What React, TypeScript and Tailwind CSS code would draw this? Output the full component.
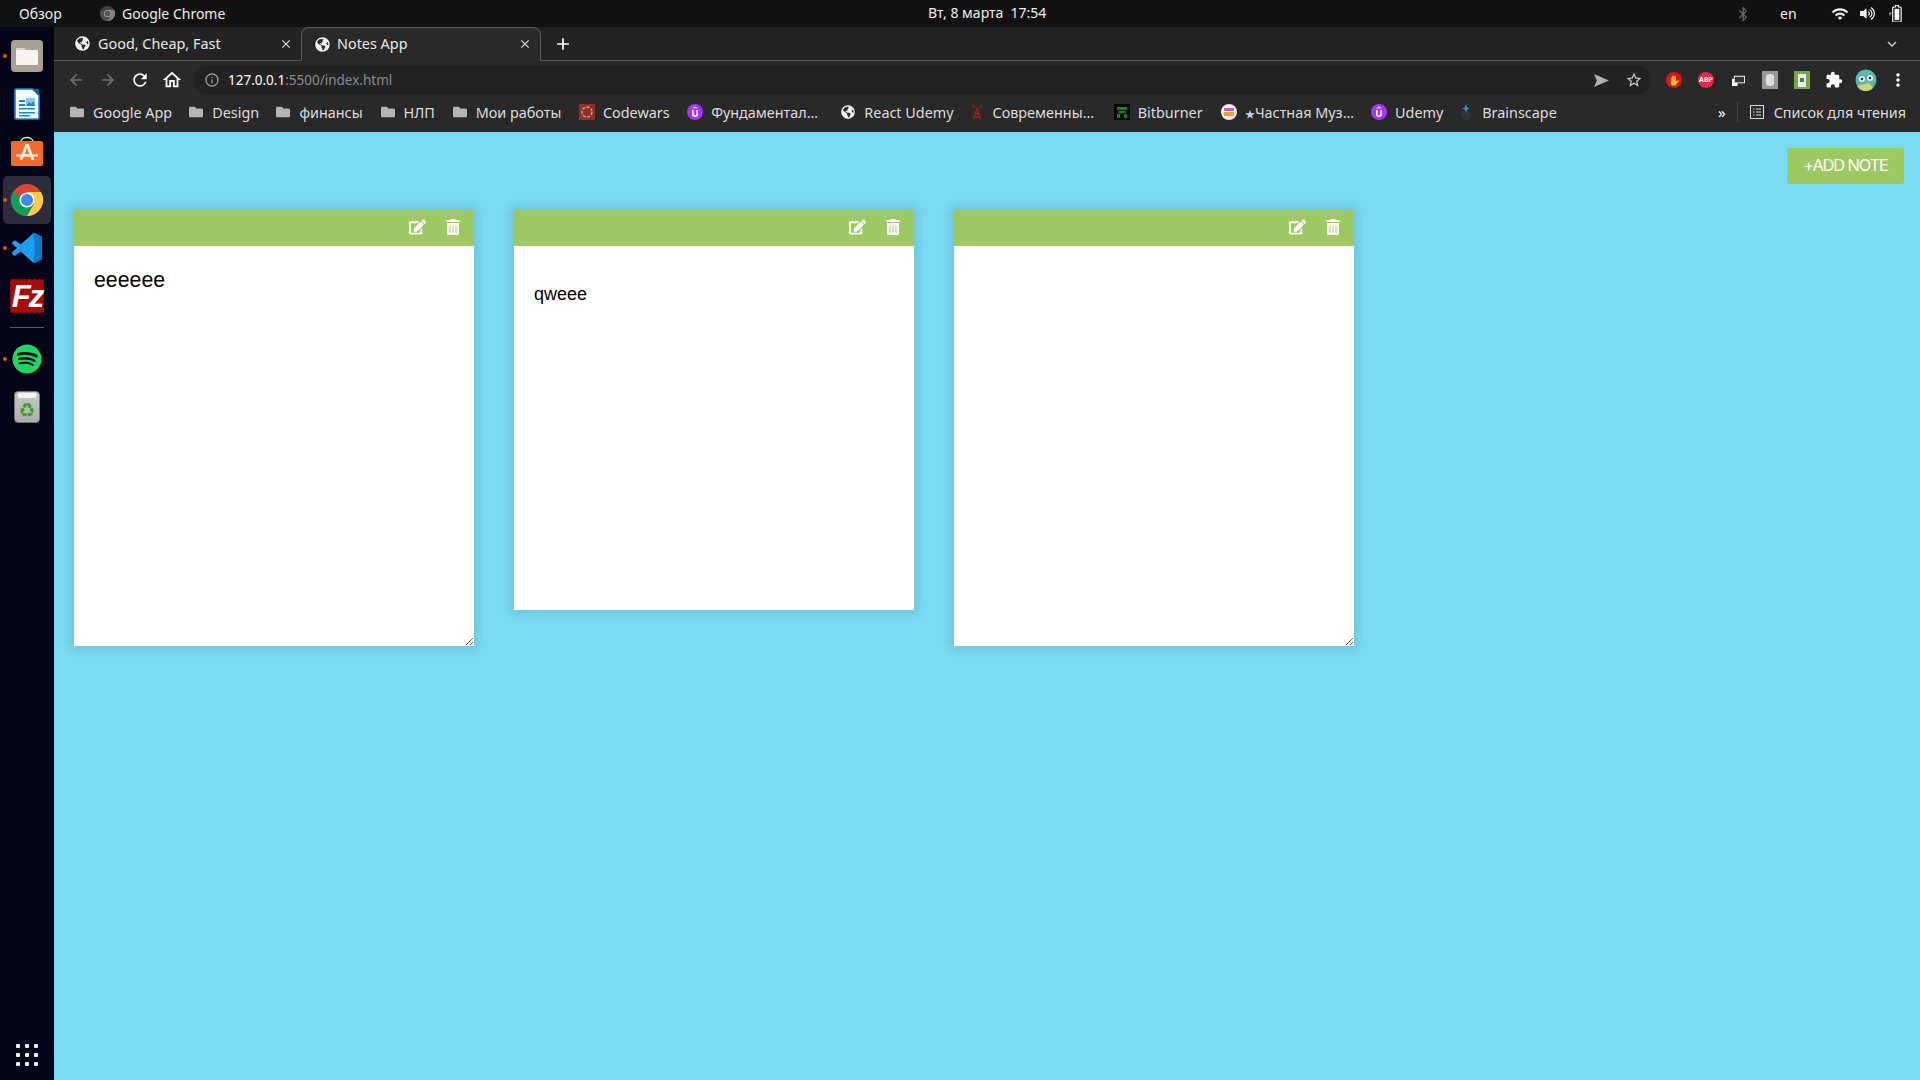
import React from "react";
import { FaEdit, FaTrashAlt, FaGlobeAmericas, FaFolder, FaBluetoothB, FaSpotify, FaVolumeUp } from "react-icons/fa";
import {
  MdArrowBack,
  MdArrowForward,
  MdRefresh,
  MdOutlineHome,
  MdInfoOutline,
  MdStarBorder,
  MdExtension,
  MdMoreVert,
  MdClose,
  MdAdd,
  MdExpandMore,
  MdWifi,
} from "react-icons/md";

const uiFont = "font-['Noto_Sans','Noto_Sans_CJK_SC',sans-serif]";

// ---- little hand drawn logos ----
const ChromeLogo = ({ className }: { className?: string }) => (
  <svg viewBox="0 0 32 32" className={className}>
    <circle cx="16" cy="16" r="16" fill="#db4437" />
    <path d="M16 16 L2.1 8 A16 16 0 0 0 16 32 L24 18z" fill="#0f9d58" />
    <path d="M16 8 H29.9 A16 16 0 0 1 16 32 L23 20z" fill="#ffcd40" />
    <circle cx="16" cy="16" r="7.6" fill="#fff" />
    <circle cx="16" cy="16" r="6" fill="#4285f4" />
  </svg>
);

const FilesIcon = () => (
  <div className="w-8 h-8 rounded-[4px] bg-[#a8a294] flex items-center justify-center">
    <svg viewBox="0 0 24 24" className="w-6 h-6">
      <path d="M1 5a1 1 0 0 1 1-1h7l2 2h11a1 1 0 0 1 1 1v13a1 1 0 0 1-1 1H2a1 1 0 0 1-1-1z" fill="#f6f4f0" />
      <path d="M1 5a1 1 0 0 1 1-1h7l2 2H1z" fill="#d8d4cb" />
    </svg>
  </div>
);

const WriterIcon = () => (
  <svg viewBox="0 0 26 32" className="w-[26px] h-8">
    <path d="M1 2a1 1 0 0 1 1-1h17l6 6v23a1 1 0 0 1-1 1H2a1 1 0 0 1-1-1z" fill="#f4f8fb" stroke="#1b87c9" strokeWidth="1.6" />
    <path d="M18 1l7 7V1z" fill="#17648f" />
    <path d="M5 12h6v2H5zM5 16h6v2H5zM5 20h16v1.6H5zM5 24h16v1.6H5zM5 27h11v1.4H5z" fill="#1b87c9" />
    <path d="M12 10h9v8h-9z" fill="#8dc3e6" />
    <path d="M12 18l3-4 2 2 2-3 2 5z" fill="#1b87c9" />
  </svg>
);

const StoreIcon = () => (
  <svg viewBox="0 0 32 32" className="w-8 h-8">
    <path d="M10 6c0-6 12-6 12 0" fill="none" stroke="#e9d9c8" strokeWidth="1.4" />
    <path d="M0 7a2 2 0 0 1 2-2h28a2 2 0 0 1 2 2v21a2 2 0 0 1-2 2H2a2 2 0 0 1-2-2z" fill="#ef6c2f" />
    <path d="M14.5 8h3l6 16h-3l-1.2-3.4h-6.6L11.5 24h-3zM16 11.5l-2.2 6.6h4.4z" fill="#fbeee4" />
    <path d="M5 18.5h22v2H5z" fill="#fbeee4" />
  </svg>
);

const VsCodeIcon = () => (
  <svg viewBox="0 0 100 100" className="w-[30px] h-[30px]">
    <path d="M71 99c1.5.6 3.300.5 4.800-.2l20.600-9.900c2.200-1 3.600-3.200 3.600-5.600V16.700c0-2.400-1.400-4.600-3.600-5.600L75.800 1.200C73.700.2 71.300.4 69.400 1.800c-.3.200-.5.400-.8.700L29.200 38.500 12 25.500c-1.600-1.200-3.800-1.100-5.300.2L1.200 30.800c-1.800 1.600-1.800 4.500 0 6.100L16 50 1.200 63.500c-1.800 1.600-1.800 4.500 0 6.100l5.500 5c1.500 1.300 3.700 1.400 5.300.2l17.200-13 39.400 36c.7.700 1.500 1.200 2.400 1.600zM75 27.300 45.100 50 75 72.700z" fill="#1f9cf0" />
    <path d="M71 99c1.500.6 3.300.5 4.800-.2l20.600-9.900c2.200-1 3.600-3.200 3.600-5.600V16.700c0-2.400-1.400-4.600-3.600-5.600L75.800 1.200C73.700.2 71.300.4 69.400 1.800L75 27.300V72.700z" fill="#0a7cc7" />
  </svg>
);

const TrashBin = () => (
  <div className="w-[26px] h-8 rounded-[4px] bg-gradient-to-b from-[#c8c8c4] to-[#aeaeaa] border border-[#77776f] flex flex-col items-center">
    <div className="w-[18px] h-[5px] mt-[1px] bg-[#f5f5f2] rounded-[1px]" />
    <span className="mt-[5px] text-[14px] leading-none text-[#3f9c35]">♻</span>
  </div>
);

const Favicon = ({ kind }: { kind: string }) => {
  if (kind === "globe") return <FaGlobeAmericas className="w-[14px] h-[14px] mx-px text-[#f1f1f1]" />;
  if (kind === "folder") return <FaFolder className="w-[14px] h-[14px] mx-px text-[#b5b5b5]" />;
  if (kind === "codewars")
    return (
      <svg viewBox="0 0 16 16" className="w-4 h-4">
        <rect width="16" height="16" fill="#8f2f25" />
        <circle cx="8" cy="8" r="5" fill="none" stroke="#d9a39b" strokeWidth="1.3" strokeDasharray="3 1.500" />
      </svg>
    );
  if (kind === "udemy")
    return (
      <svg viewBox="0 0 16 16" className="w-4 h-4">
        <circle cx="8" cy="8" r="8" fill="#a435f0" />
        <path d="M5 6v4a3 3 0 0 0 6 0V6h-1.600v4a1.400 1.400 0 0 1-2.800 0V6z" fill="#fff" />
        <path d="M8 2.500l3 1.700H5z" fill="#fff" />
      </svg>
    );
  if (kind === "tower")
    return (
      <svg viewBox="0 0 16 16" className="w-4 h-4" fill="none" stroke="#a51d24" strokeWidth="1.300">
        <path d="M8 4L4.500 15M8 4l3.500 11M6 10h4M5 13h6M3 1l3 3M13 1l-3 3" />
      </svg>
    );
  if (kind === "bitburner")
    return (
      <svg viewBox="0 0 16 16" className="w-4 h-4">
        <rect width="16" height="16" fill="#000" />
        <path d="M3 3h10v3H3zM4 7h8v2H4zM3 10h3v4H3zM10 10h3v4h-3z" fill="#0c8a0c" />
      </svg>
    );
  if (kind === "music")
    return (
      <svg viewBox="0 0 16 16" className="w-4 h-4">
        <circle cx="8" cy="8" r="8" fill="#f4eef0" />
        <path d="M3 4h10v3H3z" fill="#c45bb5" />
        <path d="M3 8h10v4H3z" fill="#f0a330" />
      </svg>
    );
  return (
    <svg viewBox="0 0 16 16" className="w-4 h-4">
      <circle cx="8" cy="11" r="5" fill="#333" />
      <path d="M8 0l1 3.500 3 1-3 1L8 9 7 5.500l-3-1 3-1z" fill="#2f9fd8" />
    </svg>
  );
};

const bookmarks = [
  { icon: "folder", label: "Google App", w: "w-[79px]" },
  { icon: "folder", label: "Design", w: "w-[47px]" },
  { icon: "folder", label: "финансы", w: "w-[64px]" },
  { icon: "folder", label: "НЛП", w: "w-[32px]" },
  { icon: "folder", label: "Мои работы", w: "w-[87px]" },
  { icon: "codewars", label: "Codewars", w: "w-[68px]" },
  { icon: "udemy", label: "Фундаментал…", w: "w-[113px]" },
  { icon: "globe", label: "React Udemy", w: "w-[88px]" },
  { icon: "tower", label: "Современны…", w: "w-[105px]" },
  { icon: "bitburner", label: "Bitburner", w: "w-[67px]" },
  { icon: "music", label: "Частная Муз…", w: "w-[110px]", star: true },
  { icon: "udemy", label: "Udemy", w: "w-[47px]" },
  { icon: "brain", label: "Brainscape", w: "w-[76px]" },
];

const NoteTools = () => (
  <div className="h-9 shrink-0 bg-[#9ec862] flex items-center justify-end gap-[20px] pr-[14px] pb-[2px] text-white">
    <FaEdit className="w-[17px] h-4" />
    <FaTrashAlt className="w-[14px] h-4" />
  </div>
);

const DockSlot = ({ children, dot, active }: { children: React.ReactNode; dot?: boolean; active?: boolean }) => (
  <div className="relative h-12 w-[54px] shrink-0 flex items-center justify-center">
    {active && <div className="absolute left-[3px] top-0 w-[48px] h-12 rounded-[5px] bg-[#2c2c3c]" />}
    {dot && <div className="absolute left-[3px] top-[22px] w-1 h-1 rounded-full bg-[#e95420]" />}
    <div className="relative">{children}</div>
  </div>
);

const ToolSlot = ({ children }: { children: React.ReactNode }) => (
  <div className="w-8 h-[30px] shrink-0 flex items-center justify-center">{children}</div>
);

export default function App() {
  return (
    <div className={`w-[1920px] h-[1080px] overflow-hidden flex flex-col ${uiFont}`}>
      {/* gnome top bar */}
      <div className="h-[27px] shrink-0 bg-[#111111] relative flex items-center text-[14px] text-[#eeeeee]">
        <span className="ml-[19px] w-[81px]">Обзор</span>
        <ChromeLogo className="w-[15px] h-[15px] grayscale opacity-60" />
        <span className="ml-[7px]">Google Chrome</span>
        <span className="absolute left-[928px] top-[2px] whitespace-pre">Вт, 8 марта  17:54</span>
        <div className="ml-auto flex items-center">
          <FaBluetoothB className="w-4 h-4 text-[#666666]" />
          <span className="ml-[29px] w-[52px]">en</span>
          <MdWifi className="w-[18px] h-[18px] -ml-[1px]" />
          <FaVolumeUp className="ml-[11px] w-[15px] h-[15px]" />
          <svg viewBox="0 0 16 18" className="ml-[13px] mr-[17px] w-[15px] h-[17px]">
            <path d="M1 8h3L2 12z" fill="#999" />
            <path d="M6 2h2V0h3v2h2a1 1 0 0 1 1 1v14a1 1 0 0 1-1 1H6a1 1 0 0 1-1-1V3a1 1 0 0 1 1-1z" fill="none" stroke="#fff" strokeWidth="1.200" />
            <rect x="7" y="4" width="5" height="12" fill="#fff" />
          </svg>
        </div>
      </div>

      <div className="flex-1 flex min-h-0">
        {/* dock */}
        <div className="w-[54px] shrink-0 bg-[#05051a] flex flex-col pt-[5px] pb-px">
          <DockSlot dot><FilesIcon /></DockSlot>
          <DockSlot><WriterIcon /></DockSlot>
          <DockSlot><StoreIcon /></DockSlot>
          <DockSlot dot active><ChromeLogo className="w-8 h-8" /></DockSlot>
          <DockSlot dot><VsCodeIcon /></DockSlot>
          <DockSlot>
            <div className="w-[34px] h-[34px] bg-[#a50d0d] border border-dashed border-[#6d0808] flex items-center justify-center text-white text-[31px] tracking-[-2px] font-bold italic leading-none font-['Liberation_Sans',sans-serif]">
              Fz
            </div>
          </DockSlot>
          <div className="mx-[10px] mt-[7px] mb-[7px] h-px shrink-0 bg-[#5c5c68]" />
          <DockSlot dot><FaSpotify className="w-[30px] h-[30px] text-[#1ed760]" /></DockSlot>
          <DockSlot><TrashBin /></DockSlot>
          <div className="mt-auto h-12 flex items-center justify-center">
            <div className="grid grid-cols-3 gap-[5px]">
              {[0, 1, 2, 3, 4, 5, 6, 7, 8].map((i) => (
                <div key={i} className="w-1 h-1 bg-[#eeeeee] rounded-[1px]" />
              ))}
            </div>
          </div>
        </div>

        <div className="flex-1 min-w-0 flex flex-col">
          {/* tab strip */}
          <div className="h-[34px] shrink-0 bg-[#232323] border-b border-[#5a5a5a] flex items-end text-[14.4px] text-[#e8e8e8]">
            <div className="w-[247px] h-[33px] flex items-center pl-[21px] shrink-0">
              <FaGlobeAmericas className="w-[15px] h-[15px] text-[#f1f1f1]" />
              <span className="ml-[8px] w-[181px]">Good, Cheap, Fast</span>
              <MdClose className="w-[14px] h-[14px] text-[#dddddd]" />
            </div>
            <div className="w-[240px] h-[34px] -mb-px flex items-center pl-[13px] pb-px shrink-0 bg-[#292929] border border-b-0 border-[#5a5a5a] rounded-t-[8px]">
              <FaGlobeAmericas className="w-[15px] h-[15px] text-[#f1f1f1]" />
              <span className="ml-[7px] w-[181px]">Notes App</span>
              <MdClose className="w-[14px] h-[14px] text-[#dddddd]" />
            </div>
            <div className="h-[33px] flex items-center ml-[12px]">
              <MdAdd className="w-[20px] h-[20px] text-white" />
            </div>
            <div className="ml-auto h-[33px] flex items-center mr-[19px]">
              <MdExpandMore className="w-[18px] h-[18px] text-[#cccccc]" />
            </div>
          </div>

          {/* toolbar */}
          <div className="h-[35px] shrink-0 bg-[#292929] flex items-center pl-[6px] pt-[3px]">
            <ToolSlot><MdArrowBack className="w-[18px] h-[18px] text-[#777777]" /></ToolSlot>
            <ToolSlot><MdArrowForward className="w-[18px] h-[18px] text-[#777777]" /></ToolSlot>
            <ToolSlot><MdRefresh className="w-[20px] h-[20px] text-white" /></ToolSlot>
            <ToolSlot><MdOutlineHome className="w-[22px] h-[22px] text-white" /></ToolSlot>
            <div className="ml-[6px] w-[1457px] h-[30px] rounded-full bg-[#232323] flex items-center pl-[10px] pr-[8px]">
              <MdInfoOutline className="w-4 h-4 text-[#999999]" />
              <span className="ml-[8px] text-[13.5px] text-white">
                127.0.0.1<span className="text-[#8a8a8a]">:5500/index.html</span>
              </span>
              <svg viewBox="0 0 16 14" className="ml-auto w-[15px] h-[13px]">
                <path d="M0 0l16 7-16 7 3-7z" fill="#b0b0b0" />
              </svg>
              <MdStarBorder className="ml-[16px] w-[18px] h-[18px] text-[#cccccc]" />
            </div>
            <div className="ml-[7px] flex items-center">
              <ToolSlot>
                <div className="w-4 h-4 flex items-center justify-center rounded-full bg-[#d9161c] text-[10px] leading-none text-white">✋</div>
              </ToolSlot>
              <ToolSlot>
                <div className="w-4 h-4 rounded-full bg-[#e8264a] text-[7px] font-bold leading-4 text-center text-white">ABP</div>
              </ToolSlot>
              <ToolSlot>
                <svg viewBox="0 0 16 14" className="w-[15px] h-[13px]">
                  <path d="M3 2h12v8H3zM1 5h6v8H1z" fill="#f5f5f5" />
                  <path d="M4 3h10v6H4z" fill="#333" />
                </svg>
              </ToolSlot>
              <ToolSlot>
                <div className="w-[16px] h-[18px] bg-[#999999] flex items-center justify-center">
                  <div className="w-[8px] h-[12px] bg-[#dddddd] rounded-[3px]" />
                </div>
              </ToolSlot>
              <ToolSlot>
                <div className="w-[16px] h-[18px] bg-[#78a548] flex items-center justify-center">
                  <div className="w-[8px] h-[13px] bg-[#eeeeee] flex items-center justify-center">
                    <div className="w-[4px] h-[4px] bg-[#2f8f3a]" />
                  </div>
                </div>
              </ToolSlot>
              <ToolSlot><MdExtension className="w-[18px] h-[18px] text-white" /></ToolSlot>
              <ToolSlot>
                <svg viewBox="0 0 22 22" className="w-[22px] h-[22px]">
                  <circle cx="11" cy="11" r="10.500" fill="#5db5ad" />
                  <path d="M2 17a10 10 0 0 0 16 2l-4-5z" fill="#c9d66b" />
                  <circle cx="7" cy="10" r="3" fill="#e8eef0" />
                  <circle cx="15" cy="9" r="3" fill="#e8eef0" />
                  <circle cx="7" cy="10" r="1.200" fill="#223" />
                  <circle cx="15" cy="9" r="1.200" fill="#223" />
                </svg>
              </ToolSlot>
              <ToolSlot><MdMoreVert className="w-5 h-5 text-white" /></ToolSlot>
            </div>
          </div>

          {/* bookmarks bar */}
          <div className="h-[36px] shrink-0 bg-[#292929] flex items-center pl-[15px] text-[14.4px] text-[#dddddd] pb-[3px]">
            {bookmarks.map((b) => (
              <div key={b.label} className="flex items-center mr-[16.2px] shrink-0">
                <Favicon kind={b.icon} />
                <span className={`ml-[8px] whitespace-nowrap ${b.w}`}>
                  {b.star && <span className="text-[10px] text-[#c7d4e4]">★</span>}
                  {b.label}
                </span>
              </div>
            ))}
            <div className="ml-auto flex items-center pr-[14px]">
              <span className="text-white text-[15px] leading-none">»</span>
              <div className="ml-[11px] mr-[12px] w-px h-5 bg-[#444444]" />
              <svg viewBox="0 0 14 14" className="w-[14px] h-[14px]" fill="none" stroke="#dddddd">
                <rect x=".5" y=".5" width="13" height="13" />
                <path d="M3 4h1.500M6 4h5M3 7h1.500M6 7h5M3 10h1.500M6 10h5" />
              </svg>
              <span className="ml-[10px]">Список для чтения</span>
            </div>
          </div>

          {/* notes page */}
          <div className="flex-1 bg-[#7bdaf3] min-h-0 font-['Liberation_Sans',sans-serif]">
            <div className="flex justify-end pt-4 pr-4">
              <button className="w-[117px] h-9 pb-[2px] rounded-[3px] bg-[#9ec862] text-white text-[16.5px] tracking-[-1.2px] font-['Inter',sans-serif]">
                +ADD NOTE
              </button>
            </div>
            <div className="mt-[26px] flex items-start gap-10 pl-5">
              <div className="w-[400px] shadow-[0_0_10px_4px_rgba(0,0,0,0.1)] flex flex-col">
                <NoteTools />
                <textarea
                  readOnly
                  defaultValue="eeeeee"
                  className="block w-full h-[400px] bg-white p-5 text-[21.3px] leading-[28px] text-black outline-none resize"
                />
              </div>
              <div className="w-[400px] h-[400px] shadow-[0_0_10px_4px_rgba(0,0,0,0.1)] flex flex-col">
                <NoteTools />
                <div className="flex-1 bg-white px-5 pt-[37px] text-[18px] leading-[22px] text-black">qweee</div>
              </div>
              <div className="w-[400px] shadow-[0_0_10px_4px_rgba(0,0,0,0.1)] flex flex-col">
                <NoteTools />
                <textarea
                  readOnly
                  className="block w-full h-[400px] bg-white p-5 text-[21px] leading-[30px] text-black outline-none resize"
                />
              </div>
            </div>
          </div>
        </div>
      </div>
    </div>
  );
}
